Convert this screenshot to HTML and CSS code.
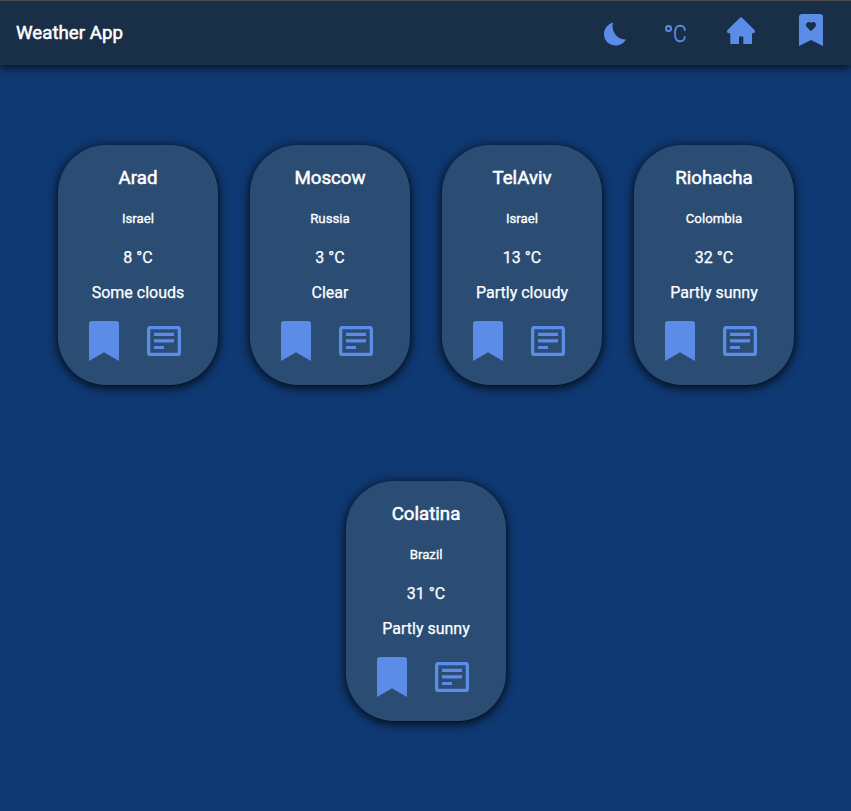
FILE: index.html
```
<!DOCTYPE html>
<html lang="en">
<head>
<meta charset="utf-8">
<title>Weather App</title>
<link rel="stylesheet" href="styles.css">
</head>
<body>
<svg class="defs" aria-hidden="true">
  <symbol id="bookmark" viewBox="0 0 30 40"><path d="M3 0H27Q30 0 30 3V40L15 31.3L0 40V3Q0 0 3 0Z"/></symbol>
  <symbol id="article" viewBox="0 0 34 30"><path fill-rule="evenodd" d="M3 0H31Q34 0 34 3V27Q34 30 31 30H3Q0 30 0 27V3Q0 0 3 0ZM3.3 3.3V26.7H30.7V3.3ZM7 6.8H27V10H7ZM7 13.3H27V16.6H7ZM7 20H17V23H7Z"/></symbol>
</svg>
<header class="header">
  <h1 class="brand">Weather App</h1>
  <nav class="nav">
    <svg class="moon" viewBox="0 0 24 24"><path d="M9.3 0C7.2 8.8 13.5 18.5 23 17.7C20.6 21.6 16.8 24 12 24C5.2 24 0 18.7 0 12C0 6.5 3.8 1.5 9.3 0Z"/></svg>
    <span class="unit"><span class="degree"></span><span class="letter">C</span></span>
    <svg class="home" viewBox="0 0 28 28"><path d="M13 .7Q14 -.2 15 .7L27.5 13Q28.2 14 27.8 15.2Q27.5 16.3 26 16.3H25V27H16.3V19.5H12V27H3.3V16.3H2Q.5 16.3.2 15.2Q-.2 14 .5 13Z"/></svg>
    <svg class="saved" viewBox="0 0 24 32"><path fill-rule="evenodd" d="M3 0H21Q24 0 24 3V32L12 26L0 32V3Q0 0 3 0ZM12 17.3L8 13.3C5.7 10.5 8 8 9.7 8C11 8 11.6 8.5 12 9.2C12.4 8.5 13 8 14.3 8C16 8 18.3 10.5 16 13.3Z"/></svg>
  </nav>
</header>
<main class="cards">
  <article class="card"><h2>Arad</h2><h3>Israel</h3><p>8 °C</p><p>Some clouds</p><div class="actions"><svg class="bookmark"><use href="#bookmark"/></svg><svg class="details"><use href="#article"/></svg></div></article>
  <article class="card"><h2>Moscow</h2><h3>Russia</h3><p>3 °C</p><p>Clear</p><div class="actions"><svg class="bookmark"><use href="#bookmark"/></svg><svg class="details"><use href="#article"/></svg></div></article>
  <article class="card"><h2>TelAviv</h2><h3>Israel</h3><p>13 °C</p><p>Partly cloudy</p><div class="actions"><svg class="bookmark"><use href="#bookmark"/></svg><svg class="details"><use href="#article"/></svg></div></article>
  <article class="card"><h2>Riohacha</h2><h3>Colombia</h3><p>32 °C</p><p>Partly sunny</p><div class="actions"><svg class="bookmark"><use href="#bookmark"/></svg><svg class="details"><use href="#article"/></svg></div></article>
  <article class="card"><h2>Colatina</h2><h3>Brazil</h3><p>31 °C</p><p>Partly sunny</p><div class="actions"><svg class="bookmark"><use href="#bookmark"/></svg><svg class="details"><use href="#article"/></svg></div></article>
</main>
</body>
</html>
```
FILE: styles.css
```
* { box-sizing: border-box; }
body {
  margin: 0;
  min-height: 100vh;
  background: #0f3972;
  color: #fff;
  font-family: Roboto, sans-serif;
}
svg { display: block; fill: #5b8de8; }
.defs { display: none; }
.header {
  display: flex;
  justify-content: space-between;
  height: 65px;
  padding: 0 28px 0 16px;
  border-top: 1px solid #4e4c4a;
  background: #192f48;
  box-shadow: 0 3px 8px rgba(0, 0, 0, .7);
}
.brand {
  margin: 0;
  font-size: 18.72px;
  font-weight: 400;
  line-height: 65px;
  -webkit-text-stroke: .5px;
}
.nav { display: flex; align-items: flex-start; }
.moon { width: 23px; height: 24px; margin: 21px 38px 0 0; }
.unit {
  display: flex;
  width: 22px;
  height: 20px;
  margin: 23px 40px 0 0;
  color: #5b8de8;
}
.degree {
  flex: none;
  width: 7px;
  height: 7px;
  margin-top: 1px;
  border: 2px solid;
  border-radius: 50%;
}
.letter {
  font-size: 24px;
  font-weight: 300;
  line-height: 20px;
  transform: scaleX(.88);
  transform-origin: left;
  margin-left: 1px;
  -webkit-text-stroke: .5px;
}
.home { width: 28px; height: 28px; margin: 16px 44px 0 0; }
.saved { width: 24px; height: 32px; margin-top: 13px; }
.cards {
  display: flex;
  flex-wrap: wrap;
  justify-content: center;
  gap: 96px 32px;
  padding: 80px 32px;
}
.card {
  width: 160px;
  height: 240px;
  padding: 22px 0 0 1px;
  border-radius: 48px;
  background: #2b4d74;
  box-shadow: 0 2px 10px 1px rgba(0, 0, 0, .8);
  text-align: center;
}
.card h2 { margin: 0; font-size: 18.72px; font-weight: 400; line-height: 22px; -webkit-text-stroke: .5px; }
.card h3 { margin: 22px 0; font-size: 13.28px; font-weight: 400; line-height: 16px; -webkit-text-stroke: .3px; }
.card p { margin: 0 0 17px; font-size: 16px; line-height: 18px; -webkit-text-stroke: .25px; }
.actions { display: flex; gap: 28px; padding-left: 30px; margin-top: 19px; }
.bookmark { width: 30px; height: 40px; }
.details { width: 34px; height: 30px; margin-top: 5px; }
```
